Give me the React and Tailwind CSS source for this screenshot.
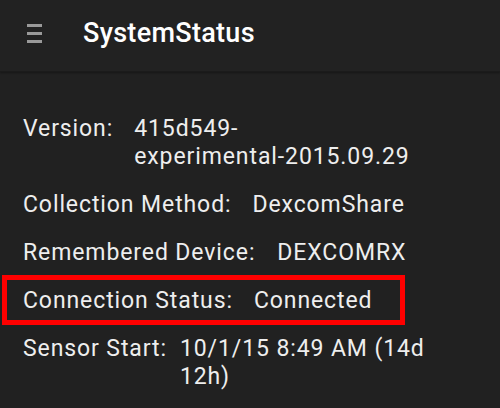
import React from "react";

function Row({ label, children, gap }) {
  return (
    <div className="flex items-start">
      <div className="shrink-0">{label}</div>
      <div className={gap}>{children}</div>
    </div>
  );
}

export default function App() {
  return (
    <div
      className="w-[500px] h-[408px] overflow-hidden bg-[#212121] text-[#eeeeee]"
      style={{ fontFamily: "Roboto, 'Noto Sans', sans-serif" }}
    >
      <div className="h-[72px] pb-[4px] flex items-center bg-[#222222] border-b border-[#1b1b1b] shadow-[0_1px_2px_rgba(0,0,0,0.35)]">
        <div className="ml-[27px] w-[15px] flex flex-col gap-[5px]">
          <div className="h-[3px] bg-[#9a9a9a]" />
          <div className="h-[3px] bg-[#9a9a9a]" />
          <div className="h-[3px] bg-[#9a9a9a]" />
        </div>
        <div className="ml-[41px] text-[27px] leading-none font-medium tracking-[0.3px] text-white">
          SystemStatus
        </div>
      </div>

      <div className="pl-[23px] pt-[43px] text-[23px] leading-[28px] tracking-[0.9px] flex flex-col gap-[20px]">
        <Row label="Version:" gap="ml-[21px]">
          415d549-
          <br />
          experimental-2015.09.29
        </Row>
        <Row label="Collection Method:" gap="ml-[21px]">
          DexcomShare
        </Row>
        <Row label="Remembered Device:" gap="ml-[22px]">
          DEXCOMRX
        </Row>
        <div className="relative">
          <div className="absolute left-[-21px] top-[-12px] w-[403px] h-[50px] border-[5px] border-[#ff0000]" />
          <Row label="Connection Status:" gap="ml-[21px]">
            Connected
          </Row>
        </div>
        <Row label="Sensor Start:" gap="ml-[13px]">
          10/1/15 8:49 AM (14d
          <br />
          12h)
        </Row>
      </div>
    </div>
  );
}
